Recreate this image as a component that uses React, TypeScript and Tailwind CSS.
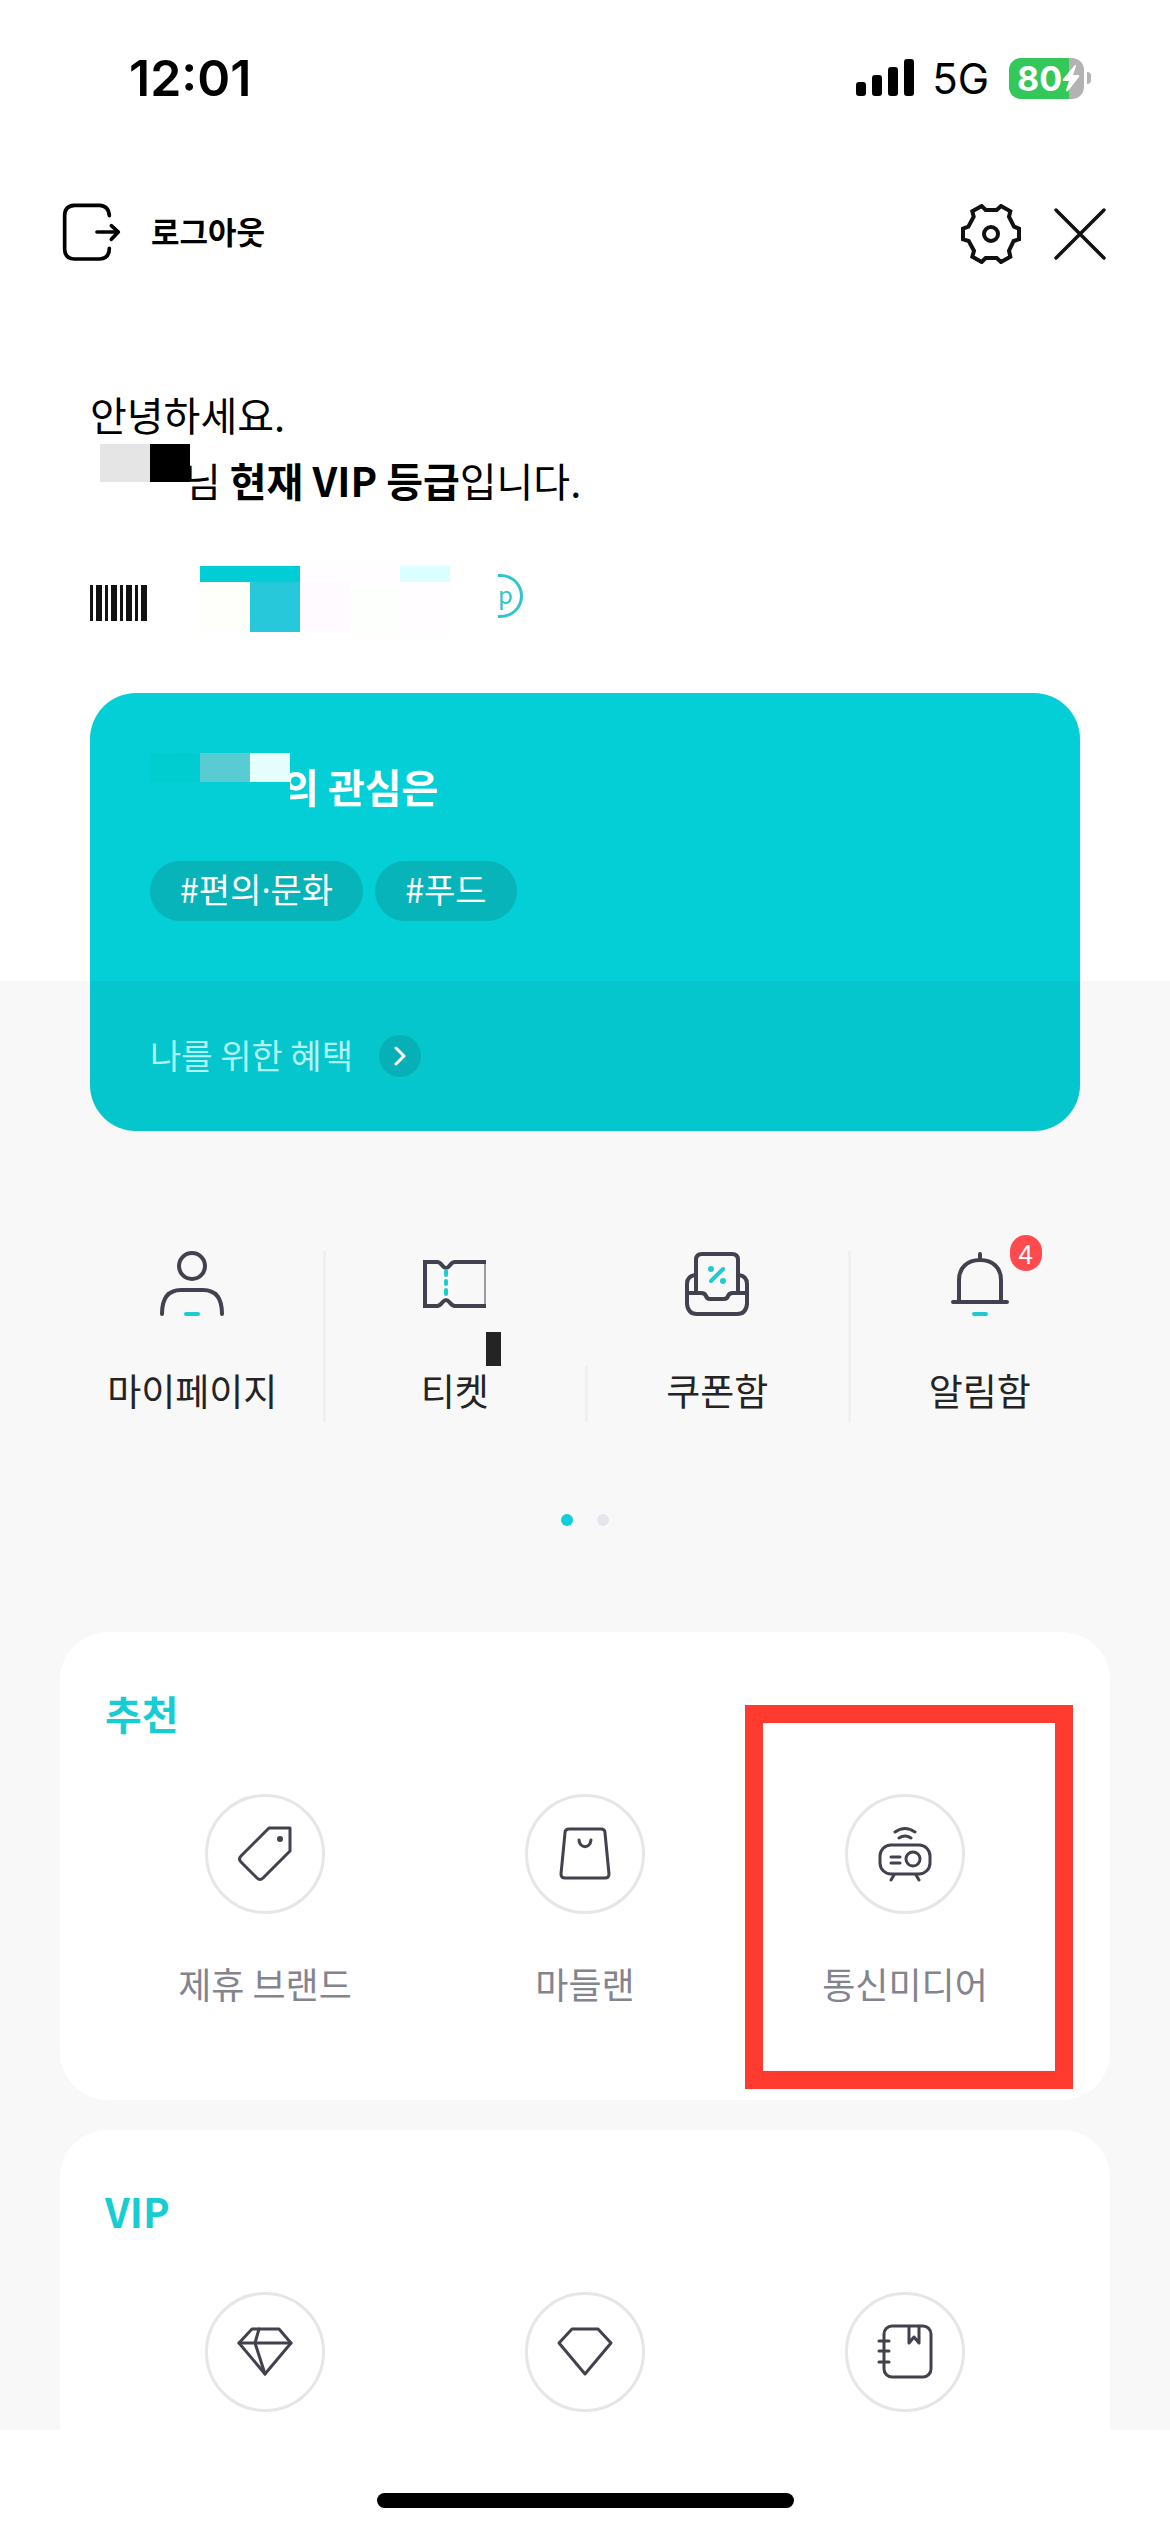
import type { ReactNode } from "react";

const DARK = "#41424d";
const TEAL = "#1fcbd1";

type IconProps = { children: ReactNode };

function LineIcon({ children }: IconProps) {
  return (
    <svg
      viewBox="0 0 60 60"
      className="size-[60px]"
      fill="none"
      stroke={DARK}
      strokeWidth="3"
      strokeLinecap="round"
      strokeLinejoin="round"
      aria-hidden="true"
    >
      {children}
    </svg>
  );
}

function QuickIcon({ children }: IconProps) {
  return (
    <svg
      viewBox="0 0 64 66"
      className="h-[66px] w-16"
      fill="none"
      stroke={DARK}
      strokeWidth="4"
      strokeLinecap="round"
      strokeLinejoin="round"
      aria-hidden="true"
    >
      {children}
    </svg>
  );
}

const QUICK_MENU = [
  {
    label: "마이페이지",
    divider: "h-full",
    icon: (
      <QuickIcon>
        <ellipse cx="32" cy="15" rx="13" ry="13" />
        <path d="M2 63C2 48 8 39 21 39H43C56 39 62 48 62 63" />
        <path d="M26 63H38" stroke={TEAL} />
      </QuickIcon>
    ),
  },
  {
    label: "티켓",
    divider: "h-14",
    masked: true,
    icon: (
      <QuickIcon>
        <path d="M14 11C19 11 19 17 23 17C27 17 27 11 32 11H63M14 55C19 55 19 49 23 49C27 49 27 55 32 55H63" strokeLinecap="butt" />
        <path d="M15 11H2V55H15" strokeLinecap="butt" strokeLinejoin="miter" />
        <path d="M62 12V54" strokeWidth="1" />
        <path d="M23 20V24M23 30V33M23 39V43" stroke={TEAL} />
      </QuickIcon>
    ),
  },
  {
    label: "쿠폰함",
    divider: "h-full",
    icon: (
      <QuickIcon>
        <path d="M11 41V9Q11 3 17 3H47Q53 3 53 9V41" />
        <path d="M10 24Q2 25 2 33V53Q3 63 12 63H52Q61 63 62 53V33Q62 25 54 24" />
        <path d="M3 42H16Q20 42 21 45Q22 48 25 48H39Q42 48 43 45Q44 42 48 42H61" />
        <path d="M38 18L26 30" stroke={TEAL} />
        <circle cx="26" cy="18" r="3" fill={TEAL} stroke="none" />
        <circle cx="38" cy="30" r="3" fill={TEAL} stroke="none" />
      </QuickIcon>
    ),
  },
  {
    label: "알림함",
    badge: 4,
    icon: (
      <QuickIcon>
        <path d="M32 3V8M11 50V29C11 17 19 9 32 9C45 9 53 17 53 29V50M5 51H59" />
        <path d="M26 63H38" stroke={TEAL} />
      </QuickIcon>
    ),
  },
];

const RECOMMENDED = [
  {
    label: "제휴 브랜드",
    icon: (
      <LineIcon>
        <path d="M34 4H55V27L28 54Q25 57 22 54L6 38Q3 35 6 32Z" />
        <circle cx="45" cy="15" r="3" fill={DARK} stroke="none" />
      </LineIcon>
    ),
  },
  {
    label: "마들랜",
    icon: (
      <LineIcon>
        <path d="M14 5H46Q50 5 50 9L54 50Q54 54 50 54H10Q6 54 6 50L10 9Q10 5 14 5Z" />
        <path d="M24 16C25 25 35 25 36 16" />
      </LineIcon>
    ),
  },
  {
    label: "통신미디어",
    highlighted: true,
    icon: (
      <LineIcon>
        <path d="M20 8Q30 1 40 8M24 14Q30 10 36 14" />
        <rect x="5" y="21" width="50" height="29" rx="11" />
        <path d="M16 33H25M16 39H25M19 51L16 56M41 51L44 56" />
        <circle cx="38" cy="35" r="7" />
      </LineIcon>
    ),
  },
];

const VIP_MENU = [
  {
    label: "VIP 혜택",
    icon: (
      <LineIcon>
        <path d="M17 7H44L56 21L30 52L4 21Z" />
        <path d="M4 21H56M24 7L20 21L30 52" />
      </LineIcon>
    ),
  },
  {
    label: "VIP 등급",
    icon: (
      <LineIcon>
        <path d="M17 7H43L56 21L30 52L4 21Z" />
      </LineIcon>
    ),
  },
  {
    label: "VIP 노트",
    icon: (
      <LineIcon>
        <rect x="9" y="4" width="47" height="51" rx="8" />
        <path d="M34 5V21L39 15L44 21V5M4 19H14M4 29H14M4 40H14" />
      </LineIcon>
    ),
  },
];

function StatusBar() {
  return (
    <div className="flex h-[156px] items-center justify-between pl-[129px] pr-[79px] font-['Inter',sans-serif] text-black">
      <span className="text-[50px] font-semibold">12:01</span>
      <div className="flex items-center">
        <svg viewBox="0 0 58 38" className="h-[38px] w-[58px]" aria-hidden="true">
          <rect x="0" y="23" width="10" height="14" rx="3" />
          <rect x="16" y="16" width="10" height="21" rx="3" />
          <rect x="32" y="8" width="10" height="29" rx="3" />
          <rect x="48" y="0" width="10" height="37" rx="3" />
        </svg>
        <span className="ml-[18px] text-[42px]">5G</span>
        <div className="ml-5 flex items-center gap-[3px]">
          <div className="flex h-[41px] w-[75px] items-center rounded-xl bg-linear-to-r from-[#34c759] from-80% to-[#b3b3b3] to-80% pl-2 text-white">
            <span className="text-[34px] font-bold">80</span>
            <svg viewBox="0 0 18 28" className="h-7 w-[18px] shrink-0" fill="currentColor" aria-hidden="true">
              <path d="M13 1L1 15Q0 17 2 17H7L4 26Q4 28 6 27L17 13Q18 11 16 11H11L14 2Q14 0 13 1Z" />
            </svg>
          </div>
          <span className="h-3 w-1 rounded-r-full bg-[#b3b3b3]" />
        </div>
      </div>
    </div>
  );
}

function TopBar() {
  return (
    <div className="mt-9 flex h-20 items-center justify-between pl-[61px] pr-[63px]">
      <button type="button" className="flex items-center gap-[30px] text-[31px] font-bold text-black">
        <svg viewBox="62 485 180 180" className="size-[60px]" fill="none" stroke="currentColor" strokeWidth="11" strokeLinecap="round" strokeLinejoin="round" aria-hidden="true">
          <path d="M207 526Q205 496 178 495H102Q73 497 73 525V625Q73 655 102 656H178Q207 654 207 624" />
          <path d="M170 575H234M213 556L234 575L213 597" />
        </svg>
        <span className="pb-[2px]">로그아웃</span>
      </button>
      <div className="mt-1 flex items-center gap-8">
        <button type="button" aria-label="설정">
          <svg viewBox="90 72 180 180" className="size-[60px]" fill="none" stroke="#111" strokeWidth="12" aria-hidden="true">
            <path d="M96 146V178L113 183L129 212L124 230L152 246L164 234H197L210 246L238 230L234 212L248 183L264 178V146L249 140L234 110L238 94L210 78L197 90H164L152 78L124 94L128 110L112 140Z" />
            <circle cx="180" cy="162" r="21" />
          </svg>
        </button>
        <button type="button" aria-label="닫기">
          <svg viewBox="0 0 54 54" className="size-[54px]" fill="none" stroke="#111" strokeWidth="3.5" strokeLinecap="round" aria-hidden="true">
            <path d="M3 3L51 51M51 3L3 51" />
          </svg>
        </button>
      </div>
    </div>
  );
}

function MemberCode() {
  return (
    <div className="mt-[53px] flex h-[66px] items-center">
      <svg viewBox="0 0 57 36" className="mt-2 h-9 w-[57px]" fill="#111" aria-label="바코드">
        <path d="M0 0h3v36h-3zM6 0h6v36h-6zM15 0h3v36h-3zM21 0h6v36h-6zM30 0h3v36h-3zM36 0h6v36h-6zM45 0h3v36h-3zM51 0h6v36h-6z" />
      </svg>
      <div className="ml-[53px] grid grid-cols-[repeat(5,50px)] grid-rows-[16px_50px]">
        <span className="bg-[#00cdd4]" />
        <span className="bg-[#00cdd4]" />
        <span className="bg-[#fffdff]" />
        <span className="bg-[#fffdff]" />
        <span className="bg-[#dbffff]" />
        <span className="bg-[#fefffa]" />
        <span className="bg-[#27c8d9]" />
        <span className="bg-[#fffaff]" />
        <span className="bg-[#fcfffc]" />
        <span className="bg-[#fffdff]" />
      </div>
      {/* right half of the point badge */}
      <span className="mb-[6px] ml-12 flex h-[44px] w-[25px] items-center rounded-r-[22px] border-y-[3px] border-r-[3px] border-[#2fc6cf] pb-1 text-[24px] leading-8 text-[#2fc6cf]">
        p
      </span>
    </div>
  );
}

function CircleMenu({ items, showLabels = true }: { items: typeof RECOMMENDED | typeof VIP_MENU; showLabels?: boolean }) {
  return (
    <div className="mt-[51px] grid grid-cols-3 px-[45px]">
      {items.map((item) => (
        <button key={item.label} type="button" aria-label={item.label} className="relative flex flex-col items-center">
          <span className="flex size-[120px] items-center justify-center rounded-full border-[3px] border-[#e6e6e8]">
            {item.icon}
          </span>
          {showLabels && <span className="mt-[42px] text-[36px] leading-[54px] text-[#84848f]">{item.label}</span>}
          {"highlighted" in item && item.highlighted && (
            <span className="absolute -bottom-[79px] -right-2 -top-[89px] left-0 border-[18px] border-[#ff3b30]" />
          )}
        </button>
      ))}
    </div>
  );
}

export default function App() {
  return (
    <div className="flex min-h-screen flex-col bg-white font-['Noto_Sans_CJK_KR',sans-serif]">
      <header>
        <StatusBar />
        <TopBar />
        <div className="mt-[109px] px-[90px] text-[40px] leading-[66px] text-black">
          <p>안녕하세요.</p>
          <p className="relative pl-[94px]">
            님 <strong className="font-bold">현재 VIP 등급</strong>입니다.
            <span className="absolute -top-[3px] left-[10px] flex h-[38px]">
              <span className="w-[50px] bg-[#e5e5e5]" />
              <span className="w-10 bg-black" />
            </span>
          </p>
          <MemberCode />
        </div>
        <div className="mx-[90px] mt-[61px] rounded-t-[46px] bg-[#05cfd6] px-[60px] pb-[60px] pt-[63px] text-white">
          <h2 className="relative pl-[132px] text-[40px] font-bold leading-[60px]">
            의 관심은
            <span className="absolute -top-[3px] left-0 flex h-[29px]">
              <span className="w-[50px] bg-[#00cdcf]" />
              <span className="w-[50px] bg-[#59cbd2]" />
              <span className="w-10 bg-[#e5ffff]" />
            </span>
            {/* the mask also hides the first strokes of the title */}
            <span className="absolute bottom-0 left-[125px] top-[26px] w-[15px] bg-[#05cfd6]" />
          </h2>
          <div className="mt-[45px] flex gap-3 text-[34px] leading-[56px]">
            <button type="button" className="h-[60px] rounded-full bg-[#07b4ba] px-[30px] pb-1">
              #편의<span className="font-['Noto_Sans',sans-serif] leading-none">·</span>문화
            </button>
            <button type="button" className="h-[60px] rounded-full bg-[#07b4ba] px-[30px] pb-1">#푸드</button>
          </div>
        </div>
      </header>

      <main className="bg-[#f8f8f8]">
        <div className="mx-[90px] flex h-[150px] items-center rounded-b-[46px] bg-[#05c5cd] px-[60px]">
          <a href="#benefits" className="flex items-center gap-[26px] text-[34px] text-[#b0f3f5]">
            <span className="pb-1">나를 위한 혜택</span>
            <span className="flex size-[42px] items-center justify-center rounded-full bg-[#07b0b7]">
              <svg viewBox="0 0 12 20" className="h-5 w-3" fill="none" stroke="#fff" strokeWidth="3" strokeLinecap="round" strokeLinejoin="round" aria-hidden="true">
                <path d="M2 2L10 10L2 18" />
              </svg>
            </span>
          </a>
        </div>

        <nav className="mt-[120px] grid grid-cols-4 pl-[61px] pr-[59px]">
          {QUICK_MENU.map((item) => (
            <a key={item.label} href="#menu" className="relative flex h-[171px] flex-col items-center text-[#242424]">
              <span className="relative">
                {item.icon}
                {item.badge && (
                  <span className="absolute -right-[30px] -top-4 flex h-9 w-8 items-center justify-center rounded-full bg-[#ff4b4e] pb-[2px] text-[26px] text-white">
                    {item.badge}
                  </span>
                )}
                {item.masked && <span className="absolute -bottom-[49px] -right-[14px] h-[34px] w-[15px] bg-[#242424]" />}
              </span>
              <span className="mt-[46px] text-[37px] leading-[54px]">{item.label}</span>
              {item.divider && <span className={`absolute bottom-0 -right-[2px] w-[3px] bg-[#f0f0f0] ${item.divider}`} />}
            </a>
          ))}
        </nav>

        <div className="mt-[92px] flex justify-center gap-6">
          <span className="size-3 rounded-full bg-[#10cfd6]" />
          <span className="size-3 rounded-full bg-[#e5e6eb]" />
        </div>

        <section className="mx-[60px] mt-[106px] rounded-[48px] bg-white pb-[90px] pt-[51px]">
          <h3 className="px-[45px] text-[40px] font-bold leading-[60px] text-[#18cdd2]">추천</h3>
          <CircleMenu items={RECOMMENDED} />
        </section>

        <section className="mx-[60px] mt-[30px] rounded-t-[48px] bg-white pb-[18px] pt-[51px]">
          <h3 className="px-[45px] text-[40px] font-bold leading-[60px] text-[#18cdd2]">VIP</h3>
          <CircleMenu items={VIP_MENU} showLabels={false} />
        </section>
      </main>

      <footer className="flex justify-center pb-6 pt-[63px]">
        <span className="h-[15px] w-[417px] rounded-full bg-black" />
      </footer>
    </div>
  );
}
